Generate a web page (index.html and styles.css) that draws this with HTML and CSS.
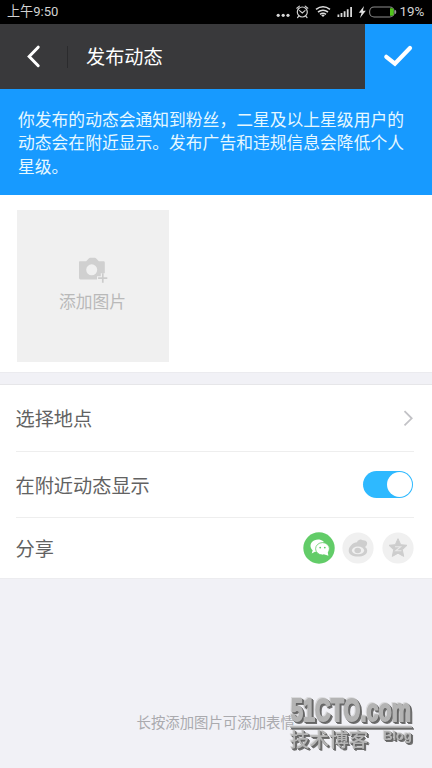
FILE: index.html
```html
<!DOCTYPE html>
<html lang="zh-CN">
<head>
<meta charset="utf-8">
<title>发布动态</title>
<link rel="stylesheet" href="styles.css">
</head>
<body>
<div class="screen">
  <div class="status">
    <span class="time">上午9:50</span>
    <svg class="status-icons" width="124" height="24" viewBox="0 0 124 24">
      <g fill="#d8d8d8"><circle cx="2.2" cy="15.3" r="1.6"/><circle cx="7.2" cy="15.3" r="1.6"/><circle cx="12" cy="15.3" r="1.6"/></g>
      <g fill="none" stroke="#d0d0d0" stroke-width="1.2" stroke-linecap="round"><circle cx="26.3" cy="12" r="5"/><path d="M20.8 8.2l2.6-2.1M31.8 8.2l-2.6-2.1M23.6 10.6l2.7 2.3 2.7-2.3M22.8 16.2l-1.2 1.3M29.8 16.2l1.2 1.3"/></g>
      <g fill="none" stroke="#dcdcdc" stroke-width="1.6"><path d="M40 9.3q7-5 14 0M42 12q5-3.6 10 0M44 14.4q3-2.2 6 0"/></g><path d="M45.2 15.2q1.8-1.3 3.6 0L47 17z" fill="#dcdcdc"/>
      <path d="M61.5 14.5h1.8V17h-1.8zM64.6 13h1.8v4h-1.8zM67.7 11.2h1.8V17h-1.8zM70.8 9.2h1.8V17h-1.8zM74.2 7h1.8v10h-1.8z" fill="#d8d8d8"/>
      <path d="M88 6l-5.2 6.7h2.8L84 18l5.8-7.2h-2.9z" fill="#e0e0e0"/>
      <rect x="93.6" y="7" width="24.6" height="10" rx="4.5" fill="none" stroke="#8d8d8d" stroke-width="1.1"/>
      <path d="M114 8.2h2.2q1.5.2 1.5 2v3.6q0 1.8-1.5 2H114z" fill="#51c51b"/><path d="M118.8 9.8q1.5.4 1.5 2.2t-1.5 2.2z" fill="#999"/>
    </svg>
    <span class="percent">19%</span>
  </div>
  <header class="bar">
    <svg class="back" width="67" height="65" viewBox="0 0 67 65"><path d="M38.2 23.2L29.2 32.5l9 9.2" fill="none" stroke="#fff" stroke-width="3" stroke-linecap="round"/></svg>
    <i class="divider"></i>
    <h1 class="title">发布动态</h1>
    <div class="confirm"><svg width="68" height="65" viewBox="0 0 68 65"><path d="M21.3 32.8l8.6 6.8L45 24" fill="none" stroke="#fff" stroke-width="4.2" stroke-linecap="round"/></svg></div>
  </header>
  <p class="notice">你发布的动态会通知到粉丝，二星及以上星级用户的<br>动态会在附近显示。发布广告和违规信息会降低个人<br>星级。</p>
  <section class="photos">
    <div class="add">
      <svg width="30" height="28" viewBox="0 0 30 28">
        <path d="M1.7 4.2h6.5L11 1.2q.4-.5 1-.5h5q.6 0 1 .5l2.8 3h4.8q1.2 0 1.2 1.2v10.8h-4v3H19v3.2H2.4q-1.4 0-1.4-1.4V5q0-.8.7-.8z" fill="#d0d0d0"/>
        <circle cx="13.7" cy="12.8" r="5.5" fill="#f0f0f0"/>
        <path d="M24.8 16.3v9.4M20.1 21.2h9.2" stroke="#ccc" stroke-width="1.7"/>
      </svg>
      <span class="add-text">添加图片</span>
    </div>
  </section>
  <section class="list">
    <div class="row place"><span>选择地点</span><svg class="arrow" width="11" height="18" viewBox="0 0 11 18"><path d="M1.5 2.2L8.7 9.3l-7.2 7" fill="none" stroke="#c2c2c6" stroke-width="1.8"/></svg></div>
    <div class="row nearby"><span>在附近动态显示</span><i class="switch"></i></div>
    <div class="row share"><span>分享</span>
      <div class="shares">
        <svg width="32" height="32" viewBox="0 0 32 32"><circle cx="16" cy="16" r="15.7" fill="#62cc68"/><path d="M20 9C17.2 6.6 11.5 6.8 8.8 10.2c-2.1 2.6-1.5 6 .9 8l-1 3.2 3.3-1.7 2 .3C12.7 15.7 15.5 11 21 10.2z" fill="#fff"/><ellipse cx="19.5" cy="16.8" rx="6.9" ry="6.2" fill="#fff" stroke="#62cc68" stroke-width=".8"/><path d="M21 22.3l4.4 1.5L24.5 19z" fill="#fff"/><circle cx="17.2" cy="15.6" r=".9" fill="#62cc68"/><circle cx="21.8" cy="15.6" r=".9" fill="#62cc68"/></svg>
        <svg width="32" height="32" viewBox="0 0 32 32"><circle cx="16" cy="16" r="15.6" fill="#f0f0f0"/><path d="M15 10.2q.2-2 2.5-2.5 2-.4 3.2.6 3-.3 4.2 1.8.8 1.8-.7 3.9l-1.2.9q2.2 1.3 2.2 3.5c0 4-4 6.2-9.2 6.2s-9.3-2.2-9.3-6.2c0-3.8 4.5-8.2 8.3-8.2z" fill="#cecece"/><ellipse cx="16" cy="18.4" rx="6.1" ry="3.9" fill="#f0f0f0"/><ellipse cx="15.7" cy="18.5" rx="3.3" ry="2.7" fill="#cecece"/></svg>
        <svg width="32" height="32" viewBox="0 0 32 32"><circle cx="16" cy="16" r="15.6" fill="#f0f0f0"/><path d="M16 6.7l2.7 6 6.3.6-4.7 4.5 1.4 6.6-5.7-3.2-5.7 3.2 1.4-6.6L7 13.3l6.3-.6z" fill="#cdcdcd" stroke="#cdcdcd" stroke-linejoin="round"/><path d="M13 14.8h5.6l-4.8 3.9 5.6.1" fill="none" stroke="#e9e9e9" stroke-width="1.1"/></svg>
      </div>
    </div>
  </section>
  <footer class="hint">长按添加图片可添加表情</footer>
  <svg class="watermark" width="140" height="70" viewBox="0 -5 140 70">
    <text class="brand" x="5" y="27.3" textLength="120" lengthAdjust="spacingAndGlyphs">51CTO.com</text>
    <path d="M4 32.3h122v1.4H4z"/>
    <text class="cn" x="4" y="53.3">技术博客</text>
    <text class="blog" x="97" y="45.6" textLength="29">Blog</text>
  </svg>
</div>
</body>
</html>
```
FILE: styles.css
```css
* { box-sizing: border-box; }
body { margin: 0; font-family: "Noto Sans CJK SC", sans-serif; }
svg { display: block; }
.screen { position: relative; width: 432px; height: 768px; overflow: hidden; background: #f1f1f6; display: flex; flex-direction: column; }
.status { height: 24px; flex: none; background: #000; color: #d2d2d2; display: flex; align-items: center; padding: 0 7px; font: 12.8px/24px Roboto, "Noto Sans CJK SC", sans-serif; }
.time { flex: 1; font-size: 13.1px; }
.status-icons { margin-right: 0; }
.percent { width: 25.5px; font-size: 13.4px; white-space: nowrap; }
.bar { height: 65px; flex: none; background: #39393b; display: flex; align-items: center; }
.divider { width: 1px; height: 22px; background: #2b2b2d; }
.title { flex: 1; margin: 0 0 0 18px; color: #fff; font-size: 19.2px; font-weight: 400; line-height: 67px; }
.confirm { width: 67px; height: 65px; background: #179aff; overflow: hidden; }
.notice { height: 106px; flex: none; margin: 0; padding: 19px 0 0 18px; background: #179aff; color: #e6f8ff; font-size: 16.8px; line-height: 23.4px; white-space: nowrap; }
.photos { height: 178px; flex: none; background: #fff; padding: 15px 17px; border-bottom: 1px solid #ebebef; }
.add { width: 152px; height: 152px; background: #f0f0f0; display: flex; flex-direction: column; align-items: center; padding: 47px 1px 0 0; }
.add-text { margin-top: 4px; color: #b9b9b9; font-size: 16.8px; line-height: 24px; }
.list { flex: none; margin-top: 11px; background: #fff; border-top: 1px solid #e6e6e9; border-bottom: 1px solid #ececef; padding: 0 18px 0 15.5px; color: #626262; font-size: 19.2px; }
.row { display: flex; align-items: center; justify-content: space-between; }
.place { height: 67px; border-bottom: 1px solid #eee; }
.nearby { height: 66px; border-bottom: 1px solid #eee; }
.share { height: 60px; }
.switch { width: 50px; height: 27px; margin-right: 1px; border-radius: 14px; background: #2eb9ff; display: flex; justify-content: flex-end; padding: 1px; }
.switch::after { content: ""; width: 25px; height: 25px; border-radius: 50%; background: #fff; }
.shares { display: flex; }
.shares svg:nth-child(2) { margin: 0 8px 0 7px; }
.hint { margin: 133px 0 0 136.5px; color: #aaaaae; font-size: 14.4px; line-height: 20px; white-space: nowrap; }
.watermark { position: absolute; left: 286px; top: 689px; fill: #b4b4b4; filter: drop-shadow(1px 1px 0 #646464) drop-shadow(1px 1px 0 #707070) drop-shadow(-1px -1px 0 #dadadc); }
.brand { font: bold 32px "Liberation Sans", sans-serif; stroke: #b4b4b4; stroke-width: 1.8px; }
.cn { font: 500 19.6px "Noto Sans CJK SC", sans-serif; }
.blog { font: bold 13.5px "Liberation Sans", sans-serif; }
```
